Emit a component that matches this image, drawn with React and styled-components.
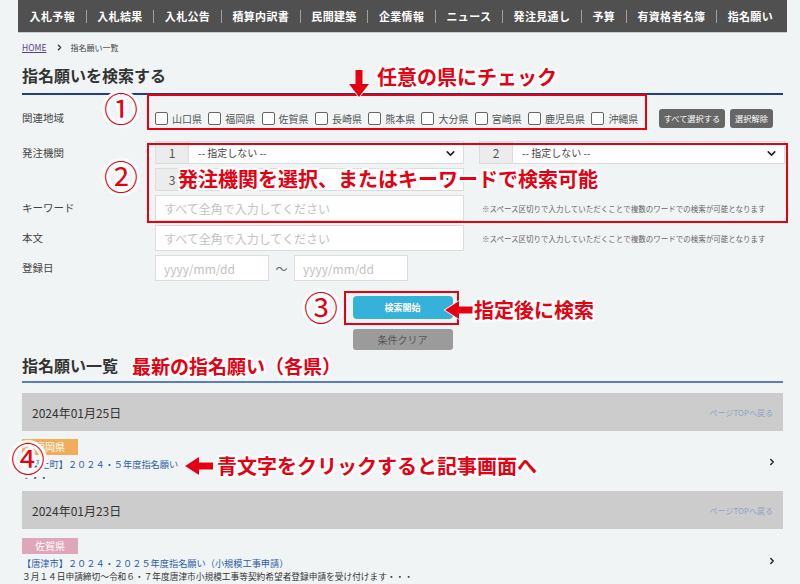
import React from 'react';
import styled, { createGlobalStyle } from 'styled-components';
import { ChevronDown, ChevronRight } from 'lucide-react';

const GlobalStyle = createGlobalStyle`
  html, body { margin: 0; padding: 0; background: #f1f4f5; }
  body { font-family: "Noto Sans CJK JP", "Noto Sans", sans-serif; color: #333; }
  * { box-sizing: border-box; }
`;

const Page = styled.div`
  position: relative;
  width: 800px;
  height: 584px;
  overflow: hidden;
`;

const Wrap = styled.div`
  margin-left: 18px;
  width: 769px;
`;

const Nav = styled.nav`
  height: 33px;
  background: #505050;
  border-bottom: 1px solid #c9ced1;
  display: flex;
  align-items: center;
  padding-left: 1px;
`;

const NavItem = styled.a`
  color: #fff;
  font-size: 11px;
  font-weight: 700;
  letter-spacing: 0.35px;
  line-height: 13px;
  padding: 0 10.6px;
  white-space: nowrap;
  flex-shrink: 0;
  border-left: ${p => (p.$first ? 'none' : '1px solid #a0a0a0')};
`;

const Content = styled.main`
  padding: 0 4px;
`;

const Crumbs = styled.div`
  display: flex;
  align-items: center;
  gap: 6px;
  padding-top: 8px;
  height: 20px;
  font-size: 8px;
  color: #444;
  a { color: #5c3c8c; text-decoration: underline; font-size: 8.5px; margin-right: 3px; }
`;

const Heading = styled.h2`
  margin: 11px 0 0;
  font-size: 16px;
  font-weight: 700;
  line-height: 22px;
  color: #333;
  padding-bottom: 7px;
  border-bottom: 2px solid ${p => p.$line};
`;

const Form = styled.div`
  display: grid;
  grid-template-columns: 133px 1fr;
  row-gap: 4px;
  padding-top: 9px;
`;

const Label = styled.div`
  font-size: 10.5px;
  color: #444;
  line-height: ${p => p.$h || 26}px;
  margin-top: ${p => p.$mt || 0}px;
`;

const Field = styled.div`
  display: flex;
  align-items: center;
  margin-top: ${p => p.$mt || 0}px;
  min-height: ${p => p.$h || 26}px;
`;

const Checks = styled.div`
  display: flex;
  align-items: center;
  flex-shrink: 0;
`;

const Check = styled.label`
  display: flex;
  align-items: center;
  gap: 4px;
  margin-right: 6.3px;
  font-size: 10px;
  color: #555;
  white-space: nowrap;
  flex-shrink: 0;
  span.box {
    width: 13px;
    height: 13px;
    border: 1px solid #666;
    border-radius: 2px;
    background: #fff;
  }
`;

const SmallBtn = styled.button`
  height: 19px;
  padding: 0 5px;
  border: none;
  border-radius: 3px;
  background: #666;
  color: #fff;
  font-family: inherit;
  font-size: 8.2px;
  white-space: nowrap;
  flex-shrink: 0;
  margin-left: ${p => p.$ml || 0}px;
`;

const SelectGrid = styled.div`
  display: grid;
  grid-template-columns: 309px 306px;
  column-gap: 15px;
  row-gap: 4px;
`;

const SelectWrap = styled.div`
  display: flex;
  height: 23px;
  border: 1px solid #dcdcdc;
  background: #fff;
  position: relative;
`;

const Num = styled.div`
  width: 33px;
  background: #ececec;
  border-right: 1px solid #dcdcdc;
  color: #555;
  font-size: 12px;
  display: flex;
  align-items: center;
  justify-content: center;
`;

const Select = styled.select`
  flex: 1;
  appearance: none;
  border: none;
  background: transparent;
  font-family: inherit;
  font-size: 10px;
  color: #444;
  padding-left: 9px;
  outline: none;
`;

const Caret = styled(ChevronDown)`
  position: absolute;
  right: 6px;
  top: 5px;
  pointer-events: none;
`;

const Input = styled.input`
  width: ${p => p.$w}px;
  height: 26px;
  border: 1px solid #dcdcdc;
  background: #fff;
  padding: 0 8px;
  font-family: inherit;
  font-size: 12px;
  color: #333;
  outline: none;
  &::placeholder { color: #c2c2c2; }
`;

const Hint = styled.span`
  margin-left: 18px;
  font-size: 7.5px;
  color: #666;
`;

const Tilde = styled.span`
  width: 25px;
  text-align: center;
  font-size: 12px;
  color: #666;
`;

const Actions = styled.div`
  display: flex;
  flex-direction: column;
  align-items: center;
  gap: 10px;
  padding-top: 15px;
`;

const SearchBtn = styled.button`
  width: 100px;
  height: 23px;
  border: none;
  border-radius: 4px;
  background: #35b1da;
  color: #fff;
  font-family: inherit;
  font-weight: 700;
  font-size: 9px;
`;

const ClearBtn = styled.button`
  width: 100px;
  height: 21px;
  border: none;
  border-radius: 3px;
  background: #9b9b9b;
  color: #555;
  font-family: inherit;
  font-size: 10px;
`;

const ListHead = styled(Heading)`
  margin-top: 4px;
  padding-bottom: 5px;
`;

const DateBar = styled.div`
  display: flex;
  align-items: center;
  justify-content: space-between;
  height: 38px;
  margin-top: ${p => p.$mt || 0}px;
  padding: 0 10px;
  background: #cccccc;
  font-size: 12px;
  color: #333;
  a { font-size: 8px; color: #8fa3c5; }
`;

const Item = styled.div`
  display: flex;
  align-items: center;
  padding: ${p => p.$pt}px 6px 6px 0;
`;

const ItemBody = styled.div`
  flex: 1;
`;

const Tag = styled.div`
  width: 56px;
  height: 16px;
  background: ${p => p.$bg};
  color: #fff;
  font-size: 10px;
  line-height: 16px;
  text-align: center;
  margin-bottom: 2px;
`;

const ItemLink = styled.a`
  display: block;
  font-size: 9.2px;
  line-height: 14px;
  color: #2b5ea7;
`;

const ItemText = styled.p`
  margin: 0;
  font-size: 8.7px;
  line-height: 14px;
  color: #333;
  white-space: nowrap;
`;

/* annotation overlays */
const outline = `0 0 1px #fff, 2px 0 0 #fff, -2px 0 0 #fff, 0 2px 0 #fff, 0 -2px 0 #fff,
  2px 2px 0 #fff, -2px -2px 0 #fff, 2px -2px 0 #fff, -2px 2px 0 #fff`;

const thickOutline = `${outline}, 3px 0 1px #fff, -3px 0 1px #fff, 0 3px 1px #fff, 0 -3px 1px #fff`;

const Note = styled.div`
  position: absolute;
  left: ${p => p.$x}px;
  top: ${p => p.$y}px;
  color: #e50012;
  font-weight: 700;
  font-size: ${p => p.$size || 20}px;
  line-height: 1;
  white-space: nowrap;
  text-shadow: ${outline};
`;

const Circle = styled.div`
  position: absolute;
  left: ${p => p.$x}px;
  top: ${p => p.$y}px;
  color: #e50012;
  font-size: 34px;
  line-height: 1;
  text-shadow: ${thickOutline};
`;

const RedBox = styled.div`
  position: absolute;
  left: ${p => p.$x}px;
  top: ${p => p.$y}px;
  width: ${p => p.$w}px;
  height: ${p => p.$h}px;
  border: 2px solid #e50012;
`;

const ArrowSvg = styled.svg`
  position: absolute;
  left: ${p => p.$x}px;
  top: ${p => p.$y}px;
  overflow: visible;
`;

const DownArrow = ({ x, y }) => (
  <ArrowSvg $x={x} $y={y} width="20" height="28" viewBox="0 0 20 28">
    <path d="M6.5 0 H13.5 V14 H20 L10 27 L0 14 H6.5 Z" fill="#e50012" stroke="#fff" strokeWidth="1.5" paintOrder="stroke" />
  </ArrowSvg>
);

const LeftArrow = ({ x, y }) => (
  <ArrowSvg $x={x} $y={y} width="28" height="18" viewBox="0 0 28 18">
    <path d="M0 9 L14 0 V5.5 H28 V12.5 H14 V18 Z" fill="#e50012" stroke="#fff" strokeWidth="1.5" paintOrder="stroke" />
  </ArrowSvg>
);

const navItems = ['入札予報', '入札結果', '入札公告', '積算内訳書', '民間建築', '企業情報', 'ニュース', '発注見通し', '予算', '有資格者名簿', '指名願い'];
const prefs = ['山口県', '福岡県', '佐賀県', '長崎県', '熊本県', '大分県', '宮崎県', '鹿児島県', '沖縄県'];
const hint = '※スペース区切りで入力していただくことで複数のワードでの検索が可能となります';

const Sel = ({ n }) => (
  <SelectWrap>
    <Num>{n}</Num>
    <Select defaultValue="">
      <option value="">-- 指定しない --</option>
    </Select>
    <Caret size={13} strokeWidth={3} color="#222" />
  </SelectWrap>
);

export default function App() {
  return (
    <Page>
      <GlobalStyle />
      <Wrap>
        <Nav>
          {navItems.map((t, i) => (
            <NavItem key={t} $first={i === 0}>{t}</NavItem>
          ))}
        </Nav>
        <Content>
          <Crumbs>
            <a href="#">HOME</a>
            <ChevronRight size={9} strokeWidth={3.5} color="#333" />
            <span>指名願い一覧</span>
          </Crumbs>
          <Heading $line="#1f3f8c">指名願いを検索する</Heading>

          <Form>
            <Label $h={28} $mt={0}>関連地域</Label>
            <Field $h={28}>
              <Checks>
                {prefs.map(p => (
                  <Check key={p}><span className="box" />{p}</Check>
                ))}
              </Checks>
              <SmallBtn $ml={14}>すべて選択する</SmallBtn>
              <SmallBtn $ml={5}>選択解除</SmallBtn>
            </Field>

            <Label $h={23} $mt={5}>発注機関</Label>
            <Field $mt={5}>
              <SelectGrid>
                <Sel n="1" />
                <Sel n="2" />
                <Sel n="3" />
              </SelectGrid>
            </Field>

            <Label>キーワード</Label>
            <Field>
              <Input $w={309} placeholder="すべて全角で入力してください" />
              <Hint>{hint}</Hint>
            </Field>

            <Label>本文</Label>
            <Field>
              <Input $w={309} placeholder="すべて全角で入力してください" />
              <Hint>{hint}</Hint>
            </Field>

            <Label>登録日</Label>
            <Field>
              <Input $w={114} placeholder="yyyy/mm/dd" />
              <Tilde>～</Tilde>
              <Input $w={114} placeholder="yyyy/mm/dd" />
            </Field>
          </Form>

          <Actions>
            <SearchBtn>検索開始</SearchBtn>
            <ClearBtn>条件クリア</ClearBtn>
          </Actions>

          <ListHead $line="#5a7dbd">指名願い一覧</ListHead>

          <DateBar $mt={10}>
            <span>2024年01月25日</span>
            <a>ページTOPへ戻る</a>
          </DateBar>
          <Item $pt={8}>
            <ItemBody>
              <Tag $bg="#f0ae5c">福岡県</Tag>
              <ItemLink>【築上町】２０２４・５年度指名願い</ItemLink>
              <ItemText>・・・</ItemText>
            </ItemBody>
            <ChevronRight size={10} strokeWidth={3.5} color="#222" />
          </Item>

          <DateBar>
            <span>2024年01月23日</span>
            <a>ページTOPへ戻る</a>
          </DateBar>
          <Item $pt={9}>
            <ItemBody>
              <Tag $bg="#dfa6b9">佐賀県</Tag>
              <ItemLink>【唐津市】２０２４・２０２５年度指名願い（小規模工事申請）</ItemLink>
              <ItemText>３月１４日申請締切～令和６・７年度唐津市小規模工事等契約希望者登録申請を受け付けます・・・</ItemText>
            </ItemBody>
            <ChevronRight size={10} strokeWidth={3.5} color="#222" />
          </Item>
        </Content>
      </Wrap>

      <RedBox $x={147} $y={94} $w={500} $h={36} />
      <RedBox $x={147} $y={143} $w={641} $h={80} />
      <RedBox $x={344} $y={291} $w={115} $h={34} />

      <DownArrow x={349} y={70} />
      <Note $x={377} $y={67}>任意の県にチェック</Note>
      <Circle $x={104} $y={91}>①</Circle>

      <Circle $x={104} $y={159}>②</Circle>
      <Note $x={178} $y={169}>発注機関を選択、またはキーワードで検索可能</Note>

      <Circle $x={304} $y={290}>③</Circle>
      <LeftArrow x={445} y={301} />
      <Note $x={474} $y={300}>指定後に検索</Note>

      <Note $x={132} $y={356} $size={19}>最新の指名願い（各県）</Note>

      <Circle $x={11} $y={441}>④</Circle>
      <LeftArrow x={185} y={457} />
      <Note $x={217} $y={456}>青文字をクリックすると記事画面へ</Note>
    </Page>
  );
}
